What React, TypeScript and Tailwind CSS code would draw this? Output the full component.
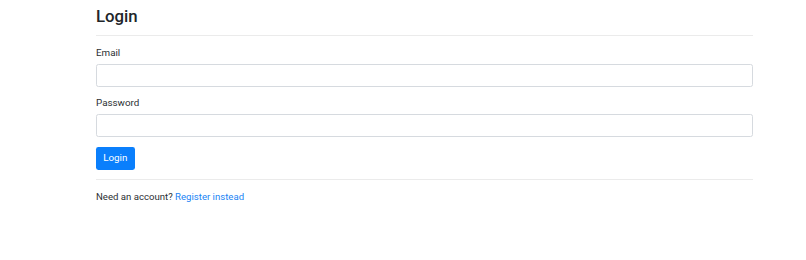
export default function App() {
  return (
    <div className="w-[806px] h-[260px] bg-white text-[#212529]" style={{ fontFamily: "Roboto, 'Liberation Sans', sans-serif" }}>
      <div className="ml-[96px] w-[657px] pt-[6px]">
        <h3 className="text-[16.8px] leading-[20px] font-medium m-0">Login</h3>
        <hr className="mt-[9px] mb-[10px] border-0 border-t border-t-[rgba(0,0,0,0.08)]" />
        <div className="mb-[9.6px]">
          <label className="block text-[9.8px] leading-[14.4px] mb-[3.6px] text-[#2b2f33]">Email</label>
          <input type="email" className="block w-full h-[22.8px] border border-[#d6dadf] rounded-[2.4px] bg-white" />
        </div>
        <div className="mb-[9.6px]">
          <label className="block text-[9.8px] leading-[14.4px] mb-[3.6px] text-[#2b2f33]">Password</label>
          <input type="password" className="block w-full h-[22.8px] border border-[#d6dadf] rounded-[2.4px] bg-white" />
        </div>
        <button className="block h-[22.8px] px-[7.2px] bg-[#0a7ffc] text-white text-[9.8px] leading-[14.4px] rounded-[2.4px]">Login</button>
        <hr className="mt-[9.6px] mb-[9.6px] border-0 border-t border-t-[rgba(0,0,0,0.08)]" />
        <p className="text-[9.6px] leading-[14.4px] text-[#2b2f33]">
          Need an account? <a className="text-[#1a84f5]" href="#">Register instead</a>
        </p>
      </div>
    </div>
  );
}
